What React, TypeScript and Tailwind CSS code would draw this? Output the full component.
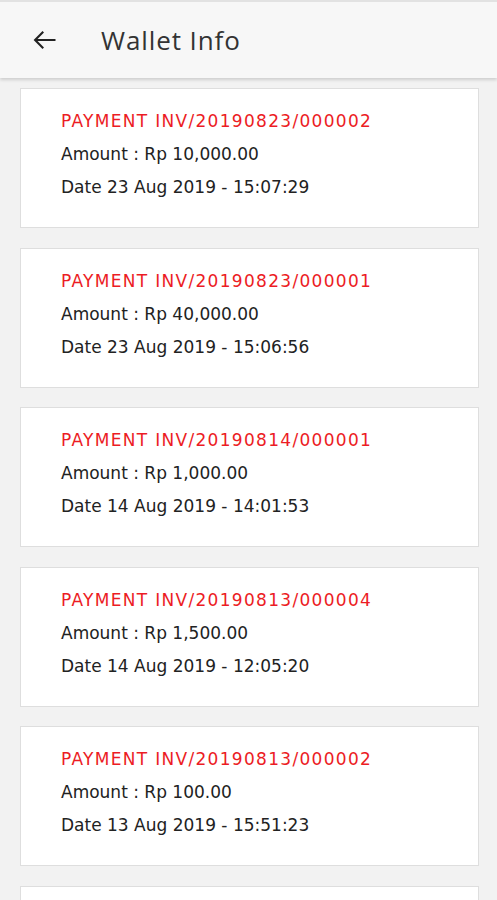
const PAYMENTS = [
  { invoice: "INV/20190823/000002", amount: "10,000.00", date: "23 Aug 2019 - 15:07:29" },
  { invoice: "INV/20190823/000001", amount: "40,000.00", date: "23 Aug 2019 - 15:06:56" },
  { invoice: "INV/20190814/000001", amount: "1,000.00", date: "14 Aug 2019 - 14:01:53" },
  { invoice: "INV/20190813/000004", amount: "1,500.00", date: "14 Aug 2019 - 12:05:20" },
  { invoice: "INV/20190813/000002", amount: "100.00", date: "13 Aug 2019 - 15:51:23" },
];

function PaymentCard({ invoice, amount, date }: { invoice: string; amount: string; date: string }) {
  return (
    <div className="h-[140px] shrink-0 bg-white border border-[#dedede] pl-10 pt-[16px] font-['DejaVu_Sans',sans-serif] text-[17px] leading-[33px]">
      <p className="text-[#ec1c24] tracking-[1.3px]">PAYMENT {invoice}</p>
      <p className="text-[#222]">Amount : Rp {amount}</p>
      <p className="text-[#222]">Date {date}</p>
    </div>
  );
}

export default function App() {
  return (
    <div className="h-[900px] overflow-hidden bg-[#f2f2f2] font-['Open_Sans',sans-serif]">
      <div className="border-t-2 border-[#e2e2e2] bg-[#f7f7f7] h-[78px] flex items-center shadow-[0_2px_3px_rgba(0,0,0,0.15)] relative z-10">
        <button className="ml-[31px] w-7 h-7 flex items-center justify-center text-[#222]">
          <svg width="28" height="28" viewBox="0 0 24 24" fill="none" stroke="currentColor" strokeWidth="1.8">
            <path d="M21 12H3.5M10.5 5l-7 7 7 7" />
          </svg>
        </button>
        <h1 className="ml-[42px] text-[26px] text-[#333] tracking-[0.9px]">Wallet Info</h1>
      </div>
      <div className="flex flex-col gap-[19.5px] px-5 pt-[10px] pr-[18px]">
        {PAYMENTS.map((p) => (
          <PaymentCard key={p.invoice} {...p} />
        ))}
        {/* next entry, only its top edge is on screen */}
        <div className="h-[140px] shrink-0 bg-white border border-[#dedede]" />
      </div>
    </div>
  );
}
